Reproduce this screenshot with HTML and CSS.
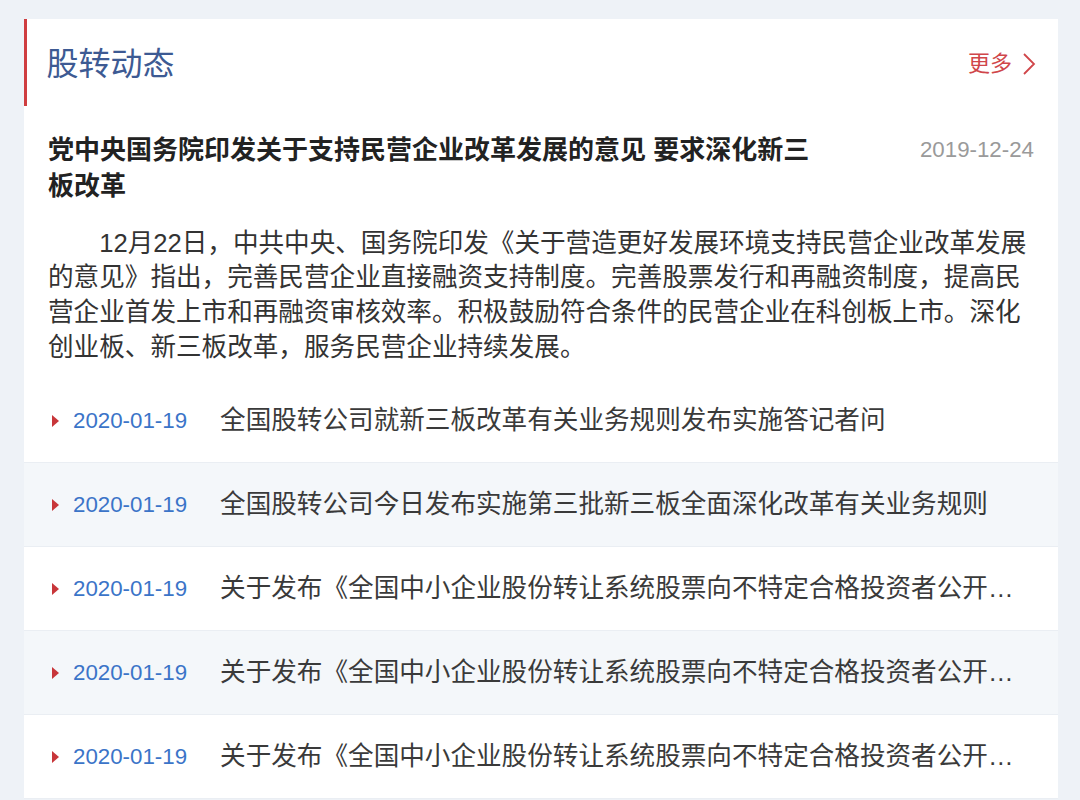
FILE: index.html
```html
<!DOCTYPE html>
<html lang="zh-CN">
<head>
<meta charset="utf-8">
<title>股转动态</title>
<link rel="stylesheet" href="styles.css">
</head>
<body>
<div class="card">
  <div class="card-head">
    <h2 class="card-title">股转动态</h2>
    <a class="more" href="#">更多<svg class="chev" width="14" height="24" viewBox="0 0 14 24"><path d="M2 2 L12 12 L2 22" fill="none" stroke="#d0464a" stroke-width="1.8"/></svg></a>
  </div>
  <div class="article">
    <div class="article-head">
      <h3 class="article-title">党中央国务院印发关于支持民营企业改革发展的意见 要求深化新三板改革</h3>
      <span class="article-date">2019-12-24</span>
    </div>
    <p class="article-body">12月22日，中共中央、国务院印发《关于营造更好发展环境支持民营企业改革发展的意见》指出，完善民营企业直接融资支持制度。完善股票发行和再融资制度，提高民营企业首发上市和再融资审核效率。积极鼓励符合条件的民营企业在科创板上市。深化创业板、新三板改革，服务民营企业持续发展。</p>
  </div>
  <ul class="news">
    <li class="row"><span class="tri"></span><span class="date">2020-01-19</span><span class="text">全国股转公司就新三板改革有关业务规则发布实施答记者问</span></li>
    <li class="row alt"><span class="tri"></span><span class="date">2020-01-19</span><span class="text">全国股转公司今日发布实施第三批新三板全面深化改革有关业务规则</span></li>
    <li class="row"><span class="tri"></span><span class="date">2020-01-19</span><span class="text">关于发布《全国中小企业股份转让系统股票向不特定合格投资者公开发行股票并在精选层挂牌规则（试行）》的公告</span></li>
    <li class="row alt"><span class="tri"></span><span class="date">2020-01-19</span><span class="text">关于发布《全国中小企业股份转让系统股票向不特定合格投资者公开发行并在精选层挂牌审查细则（试行）》的公告</span></li>
    <li class="row"><span class="tri"></span><span class="date">2020-01-19</span><span class="text">关于发布《全国中小企业股份转让系统股票向不特定合格投资者公开发行并在精选层挂牌业务指南》的公告</span></li>
  </ul>
</div>
</body>
</html>
```

FILE: styles.css
```css
* { box-sizing: border-box; }
html, body { margin: 0; padding: 0; }
body {
  background: #eef2f7;
  padding: 19px 22px 0 24px;
  font-family: "Liberation Sans", "Noto Sans CJK SC", sans-serif;
  color: #333;
  height: 800px;
  overflow: hidden;
}
.card {
  background: #fff;
}
.card-head {
  height: 87px;
  display: flex;
  align-items: center;
  justify-content: space-between;
  border-left: 3.5px solid #cf3d40;
  padding: 3px 22px 0 19.5px;
}
.card-title {
  margin: 0;
  font-size: 32px;
  font-weight: normal;
  color: #3d5a93;
  line-height: 40px;
}
.more {
  display: flex;
  align-items: center;
  gap: 10px;
  font-size: 22px;
  color: #d0464a;
  text-decoration: none;
  line-height: 30px;
}
.chev { display: block; }
.article {
  padding: 26px 24px 0 24px;
}
.article-head {
  display: flex;
  justify-content: space-between;
  align-items: flex-start;
}
.article-title {
  margin: 0;
  width: 775px;
  font-size: 26px;
  font-weight: bold;
  line-height: 36px;
  color: #222;
}
.article-date {
  font-size: 22.3px;
  line-height: 36px;
  color: #9a9a9a;
}
.article-body {
  margin: 21.6px 0 0 0;
  font-size: 25.6px;
  line-height: 34.7px;
  text-indent: 2em;
  color: #333;
}
.news {
  list-style: none;
  margin: 14.6px 0 0 0;
  padding: 0;
}
.row {
  height: 84px;
  display: flex;
  align-items: center;
  padding: 0 36px 0 28px;
  border-bottom: 1px solid #eaeef3;
  background: #fff;
}
.row.alt { background: #f4f7fa; }
.tri {
  width: 0;
  height: 0;
  border-left: 7px solid #c8363a;
  border-top: 6px solid transparent;
  border-bottom: 6px solid transparent;
  flex: none;
}
.date {
  flex: none;
  margin-left: 14px;
  font-size: 22.3px;
  color: #3b74c8;
}
.text {
  flex: 1;
  min-width: 0;
  margin-left: 33px;
  font-size: 25.6px;
  line-height: 34px;
  margin-bottom: 1px;
  color: #3a3a3a;
  white-space: nowrap;
  overflow: hidden;
  text-overflow: ellipsis;
}
```
